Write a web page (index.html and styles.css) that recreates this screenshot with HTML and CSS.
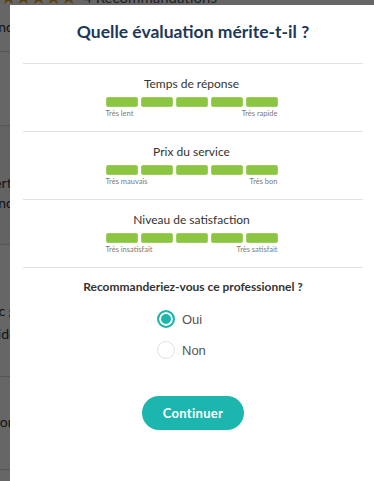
FILE: index.html
```html
<!DOCTYPE html>
<html lang="fr">

<head>
    <meta charset="UTF-8">
    <meta name="viewport" content="width=device-width, initial-scale=1.0">
    <title>Évaluation</title>
    <link rel="stylesheet" href="styles.css">
</head>

<body>
    <div class="page">
        <div class="head">
            <span class="stars">★★★★★</span>
            <span class="count">4 Recommandations</span>
        </div>
        <div class="row row-a"><span class="frag">Maintenance</span></div>
        <div class="row row-b"></div>
        <div class="row row-c">
            <span class="frag">Artisan certifie</span>
            <span class="frag">de confiance</span>
        </div>
        <div class="row row-d">
            <span class="frag">Diagnostic gratuit na</span>
            <span class="frag">Devis rapide ca</span>
        </div>
        <div class="row row-e"><span class="frag">Interventions na</span></div>
    </div>

    <div class="overlay"></div>

    <div class="modal">
        <h2 class="modal-title">Quelle évaluation mérite-t-il ?</h2>

        <div class="criteria">
            <div class="criteria-name">Temps de réponse</div>
            <div class="scale">
                <span></span><span></span><span></span><span></span><span></span>
            </div>
            <div class="scale-labels"><span>Très lent</span><span>Très rapide</span></div>
        </div>

        <div class="criteria">
            <div class="criteria-name">Prix du service</div>
            <div class="scale">
                <span></span><span></span><span></span><span></span><span></span>
            </div>
            <div class="scale-labels"><span>Très mauvais</span><span>Très bon</span></div>
        </div>

        <div class="criteria">
            <div class="criteria-name">Niveau de satisfaction</div>
            <div class="scale">
                <span></span><span></span><span></span><span></span><span></span>
            </div>
            <div class="scale-labels"><span>Très insatisfait</span><span>Très satisfait</span></div>
        </div>

        <div class="recommend">
            <div class="question">Recommanderiez-vous ce professionnel ?</div>
            <div class="options">
                <label class="option"><span class="radio checked"></span>Oui</label>
                <label class="option"><span class="radio"></span>Non</label>
            </div>
            <button class="btn">Continuer</button>
        </div>
    </div>
</body>

</html>
```

FILE: styles.css
```css
* {
    margin: 0;
    padding: 0;
    box-sizing: border-box;
}

body {
    width: 374px;
    height: 481px;
    overflow: hidden;
    position: relative;
    background: #fff;
    font-family: Lato, "Open Sans", sans-serif;
}

/* page behind the overlay */
.page {
    color: #333;
    font-size: 14px;
}

.head {
    display: flex;
    align-items: center;
    gap: 8px;
    height: 14px;
    margin-top: -10px;
}

.stars {
    color: #e0a81c;
    font-size: 19px;
    letter-spacing: -2px;
    font-family: "DejaVu Sans", sans-serif;
}

.count {
    color: #555;
    font-size: 15px;
}

.row {
    border-bottom: 1px solid #d8d8d8;
    overflow: hidden;
}

.frag {
    display: block;
    margin-left: -60px;
    white-space: nowrap;
    width: 80px;
    text-align: right;
}

.row-a {
    height: 48px;
    padding-top: 14px;
}

.row-b {
    height: 74px;
    border-bottom-color: #cfd8e4;
}

.row-c {
    height: 119px;
    padding-top: 47px;
    background: #f7f7f7;
    line-height: 20px;
}

.row-d {
    height: 132px;
    padding-top: 54px;
    line-height: 23px;
}

.row-e {
    height: 93px;
    padding-top: 36px;
}

.overlay {
    position: absolute;
    inset: 0;
    background: rgba(0, 0, 0, 0.6);
}

/* modal */
.modal {
    position: absolute;
    top: 5px;
    left: 10px;
    width: 366px;
    height: 500px;
    padding: 0 13px;
    background: #fff;
}

.modal-title {
    padding-top: 15px;
    height: 58px;
    font-size: 17.5px;
    line-height: 24px;
    font-weight: 700;
    color: #1d3859;
    text-align: center;
}

.criteria {
    border-top: 1px solid #e2e2e2;
    padding: 11px 3px 12px 0;
    text-align: center;
}

.criteria-name {
    font-size: 12px;
    line-height: 17px;
    color: #333;
    margin-bottom: 5px;
}

.scale {
    display: flex;
    justify-content: center;
    gap: 3px;
    margin-bottom: 2px;
}

.scale span {
    width: 32px;
    height: 10px;
    border-radius: 2px;
    background: #8bc541;
    border: 1px solid #9dd05a;
}

.scale-labels {
    width: 172px;
    margin: 0 auto;
    display: flex;
    justify-content: space-between;
    font-size: 7.5px;
    line-height: 10px;
    color: #7a7a7a;
}

.recommend {
    border-top: 1px solid #e2e2e2;
    padding-top: 12px;
    text-align: center;
}

.question {
    font-size: 12px;
    line-height: 14px;
    font-weight: 700;
    color: #333;
    margin-bottom: 16px;
}

.options {
    width: 72px;
    margin: 0 auto;
    display: flex;
    flex-direction: column;
    gap: 13px;
}

.option {
    display: flex;
    align-items: center;
    gap: 7px;
    height: 18px;
    font-family: "Liberation Sans", Arial, sans-serif;
    font-size: 13px;
    color: #555;
}

.radio {
    width: 18px;
    height: 18px;
    border-radius: 50%;
    border: 1px solid #dbe2ea;
    background: #fff;
}

.radio.checked {
    border: 2px solid #1cb6ad;
    box-shadow: inset 0 0 0 2px #fff;
    background: #1cb6ad;
}

.btn {
    display: block;
    width: 102px;
    height: 34px;
    margin: 37px auto 0;
    border: none;
    border-radius: 17px;
    background: #1cb6ae;
    color: #fff;
    font-family: Lato, sans-serif;
    font-size: 13px;
    font-weight: 700;
    letter-spacing: 0.3px;
}
```
